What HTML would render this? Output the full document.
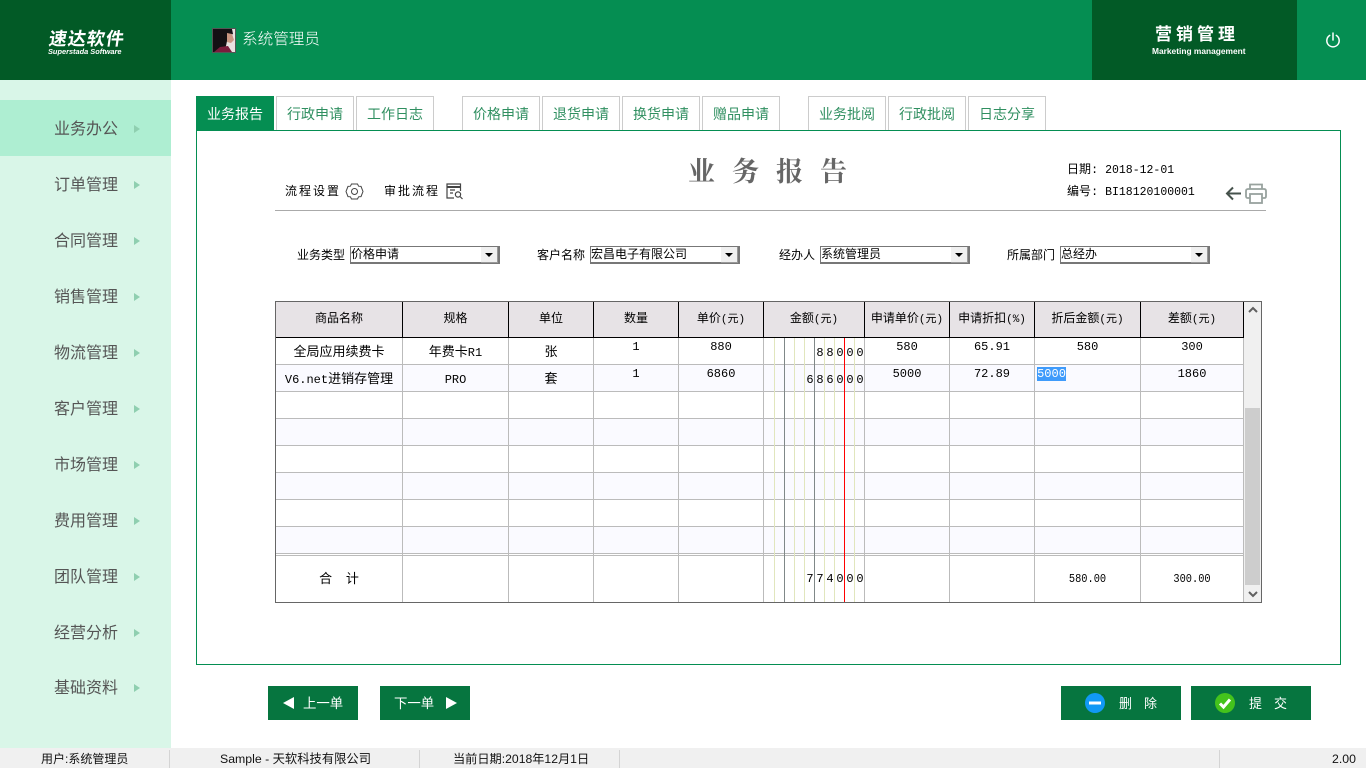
<!DOCTYPE html>
<html lang="zh">
<head>
<meta charset="utf-8">
<title>业务报告</title>
<style>
html,body{margin:0;padding:0;width:1366px;height:768px;overflow:hidden;background:#fff}
body{position:relative;font-family:"Liberation Sans","Noto Sans CJK SC",sans-serif;color:#000}
div,span,svg{position:absolute;box-sizing:border-box}
.t{white-space:nowrap;line-height:1}
.nav{left:0;width:171px;height:20px;line-height:20px;font-size:16px;color:#555;padding-left:54px;white-space:nowrap}
.nav i{position:absolute;left:134px;top:5px;width:0;height:0;border-left:6px solid #8fcfb0;border-top:4px solid transparent;border-bottom:4px solid transparent}
.tab{top:96px;width:78px;height:34px;border:1px solid #ccc;border-bottom:0;color:#2f8f60;font-size:14px;line-height:35px;text-align:center;background:#fff;white-space:nowrap}
.lab{font-size:12px;line-height:1;white-space:nowrap;top:249px;font-family:"WenQuanYi Zen Hei","Noto Sans CJK SC",sans-serif}
.sel{top:246px;width:150px;height:18px;background:#fff;border:1px solid #777;border-right-width:2px;border-bottom-width:2px;font-size:12px;line-height:14px;padding-left:0;white-space:nowrap;font-family:"WenQuanYi Zen Hei","Noto Sans CJK SC",sans-serif}
.sel b{position:absolute;right:0;top:0;width:16px;height:15px;background:#f0f0f0;border-right:1px solid #999;border-bottom:1px solid #999}
.sel b:after{content:"";position:absolute;left:4px;top:6px;border-top:4px solid #000;border-left:4px solid transparent;border-right:4px solid transparent}
.h{top:302px;height:35px;background:#e7e3e6;font-size:12px;line-height:35px;text-align:center;white-space:nowrap;font-family:"Liberation Mono","WenQuanYi Zen Hei","Noto Sans CJK SC",monospace}
.h em{position:static;font-style:normal;font-size:11px}
.v{top:302px;width:1px;height:300px;background:#bbb}
.vh{top:302px;width:1px;height:36px;background:#000}
.r{left:276px;width:967px;height:1px;background:#bbb}
.b{left:276px;width:967px;height:26px;background:#fafaff}
.c{font-size:13px;line-height:14px;text-align:center;white-space:nowrap;font-family:"Liberation Mono","WenQuanYi Zen Hei","Noto Sans CJK SC",monospace}
.c em{position:static;font-style:normal;font-size:12px}
.n{font-size:12px;line-height:14px;text-align:center;white-space:nowrap;font-family:"Liberation Mono",monospace}
.sm{transform:scaleX(.86)}
.d{width:10px;text-align:center;font-family:"Liberation Mono",monospace;font-size:12px;line-height:14px}
.btn{top:686px;height:34px;background:#06753f;color:#fff;font-size:13px;line-height:36px;white-space:nowrap}
.st{top:752px;font-size:12.3px;line-height:14px;white-space:nowrap;color:#111}
.sep{top:750px;width:1px;height:18px;background:#d4d4d4}
</style>
</head>
<body>
<!-- header -->
<div style="left:0;top:0;width:1366px;height:80px;background:#058e52"></div>
<div style="left:0;top:0;width:171px;height:80px;background:#025a26"></div>
<div class="t" style="left:49px;top:30px;color:#fff;font-size:18px;font-weight:bold;transform:skewX(-8deg);letter-spacing:1px">速达软件</div>
<div class="t" style="left:48px;top:48px;color:#fff;font-size:7.4px;font-weight:bold;font-style:italic">Superstada Software</div>
<svg style="left:212px;top:28px" width="24" height="25" viewBox="0 0 24 25">
<rect width="24" height="25" fill="#555"/>
<rect x="1" y="1" width="22" height="23" fill="#e8e2e0"/>
<path d="M1 1H20L21 6L16 8L14 18L10 24H1Z" fill="#141014"/>
<path d="M15 5L20 6L22 12L19 15L15 14Z" fill="#c99682"/>
<path d="M2 24L8 19L16 18L20 24Z" fill="#7a1c3c"/>
</svg>
<div class="t" style="left:242px;top:32px;color:#fff;font-size:15.6px;font-weight:300">系统管理员</div>
<div style="left:1092px;top:0;width:205px;height:80px;background:#025a26"></div>
<div class="t" style="left:1155px;top:26px;color:#fff;font-size:17px;font-weight:bold;letter-spacing:4px">营销管理</div>
<div class="t" style="left:1152px;top:47px;color:#fff;font-size:8.4px;font-weight:bold">Marketing management</div>
<svg style="left:1325px;top:32px" width="16" height="16" viewBox="0 0 16 16" fill="none" stroke="#fff" stroke-width="1.5" stroke-linecap="round"><path d="M4.7 3.4A6.2 6.2 0 1 0 11.3 3.4"/><path d="M8 1V8"/></svg>

<!-- sidebar -->
<div style="left:0;top:80px;width:171px;height:668px;background:#d9f6e8"></div>
<div style="left:0;top:100px;width:171px;height:56px;background:#aeeed2"></div>
<div class="nav" style="top:120px">业务办公<i></i></div>
<div class="nav" style="top:176px">订单管理<i></i></div>
<div class="nav" style="top:232px">合同管理<i></i></div>
<div class="nav" style="top:288px">销售管理<i></i></div>
<div class="nav" style="top:344px">物流管理<i></i></div>
<div class="nav" style="top:400px">客户管理<i></i></div>
<div class="nav" style="top:456px">市场管理<i></i></div>
<div class="nav" style="top:512px">费用管理<i></i></div>
<div class="nav" style="top:568px">团队管理<i></i></div>
<div class="nav" style="top:624px">经营分析<i></i></div>
<div class="nav" style="top:679px">基础资料<i></i></div>

<!-- tabs -->
<div class="tab" style="left:196px;background:#058e52;border-color:#058e52;color:#fff">业务报告</div>
<div class="tab" style="left:276px">行政申请</div>
<div class="tab" style="left:356px">工作日志</div>
<div class="tab" style="left:462px">价格申请</div>
<div class="tab" style="left:542px">退货申请</div>
<div class="tab" style="left:622px">换货申请</div>
<div class="tab" style="left:702px">赠品申请</div>
<div class="tab" style="left:808px">业务批阅</div>
<div class="tab" style="left:888px">行政批阅</div>
<div class="tab" style="left:968px">日志分享</div>

<!-- panel -->
<div style="left:196px;top:130px;width:1145px;height:535px;border:1px solid #058e52"></div>
<div class="t" style="left:688px;top:156px;font-size:27px;letter-spacing:17px;color:#666;font-family:'Noto Serif CJK SC',serif;font-weight:bold">业务报告</div>

<div class="t" style="left:285px;top:185px;font-size:12px;letter-spacing:2px;font-family:'WenQuanYi Zen Hei','Noto Sans CJK SC',sans-serif">流程设置</div>
<svg style="left:345px;top:182px" width="19" height="19" viewBox="0 0 19 19" fill="none" stroke="#444" stroke-width="1"><path d="M6.5 2H12.5L13.6 4.2L16 4.4L18 9.5L16 14.6L13.6 14.8L12.5 17H6.5L5.4 14.8L3 14.6L1 9.5L3 4.4L5.4 4.2Z"/><circle cx="9.5" cy="9.5" r="3"/></svg>
<div class="t" style="left:384px;top:185px;font-size:12px;letter-spacing:2px;font-family:'WenQuanYi Zen Hei','Noto Sans CJK SC',sans-serif">审批流程</div>
<svg style="left:446px;top:183px" width="18" height="17" viewBox="0 0 18 17" fill="none" stroke="#444" stroke-width="1.2"><path d="M14.5 8V1H1V15H8"/><path d="M1 4H14.5" stroke-width="2"/><path d="M4 7H9M4 10H7"/><circle cx="12" cy="11.5" r="2.6"/><path d="M14 13.5L16.5 16"/></svg>

<div class="t" style="left:1067px;top:164px;font-size:12px;font-family:'Liberation Mono','Noto Sans CJK SC',monospace">日期:<span style="position:static;font-size:11.5px"> 2018-12-01</span></div>
<div class="t" style="left:1067px;top:186px;font-size:12px;font-family:'Liberation Mono','Noto Sans CJK SC',monospace">编号:<span style="position:static;font-size:11.5px"> BI18120100001</span></div>
<svg style="left:1225px;top:186px" width="17" height="15" viewBox="0 0 17 15" fill="none" stroke="#46524c" stroke-width="2"><path d="M16 7.5H2M8 1.5L2 7.5L8 13.5"/></svg>
<svg style="left:1245px;top:183px" width="22" height="21" viewBox="0 0 22 21" fill="none" stroke="#98a29e" stroke-width="1.8"><path d="M5 6V1.5H17V6"/><path d="M5 15H2.5Q1 15 1 13V8Q1 6 3 6H19Q21 6 21 8V13Q21 15 19.5 15H17"/><rect x="5" y="11" width="12" height="9"/></svg>
<div style="left:275px;top:210px;width:991px;height:1px;background:#aaa"></div>

<!-- form -->
<div class="lab" style="left:297px">业务类型</div>
<div class="sel" style="left:350px">价格申请<b></b></div>
<div class="lab" style="left:537px">客户名称</div>
<div class="sel" style="left:590px">宏昌电子有限公司<b></b></div>
<div class="lab" style="left:779px">经办人</div>
<div class="sel" style="left:820px">系统管理员<b></b></div>
<div class="lab" style="left:1007px">所属部门</div>
<div class="sel" style="left:1060px">总经办<b></b></div>

<!-- table -->
<div style="left:275px;top:301px;width:987px;height:302px;background:#fff"></div>
<div class="b" style="top:365px"></div>
<div class="b" style="top:419px"></div>
<div class="b" style="top:473px"></div>
<div class="b" style="top:527px"></div>

<div class="h" style="left:276px;width:126px">商品名称</div>
<div class="h" style="left:403px;width:105px">规格</div>
<div class="h" style="left:509px;width:84px">单位</div>
<div class="h" style="left:594px;width:84px">数量</div>
<div class="h" style="left:679px;width:84px">单价<em>(元)</em></div>
<div class="h" style="left:764px;width:100px">金额<em>(元)</em></div>
<div class="h" style="left:865px;width:84px">申请单价<em>(元)</em></div>
<div class="h" style="left:950px;width:84px">申请折扣<em>(%)</em></div>
<div class="h" style="left:1035px;width:105px">折后金额<em>(元)</em></div>
<div class="h" style="left:1141px;width:102px">差额<em>(元)</em></div>

<div class="r" style="top:364px"></div>
<div class="r" style="top:391px"></div>
<div class="r" style="top:418px"></div>
<div class="r" style="top:445px"></div>
<div class="r" style="top:472px"></div>
<div class="r" style="top:499px"></div>
<div class="r" style="top:526px"></div>
<div class="r" style="top:553px"></div>
<div class="r" style="top:555px"></div>

<div class="v" style="left:402px"></div>
<div class="v" style="left:508px"></div>
<div class="v" style="left:593px"></div>
<div class="v" style="left:678px"></div>
<div class="v" style="left:763px"></div>
<div class="v" style="left:864px"></div>
<div class="v" style="left:949px"></div>
<div class="v" style="left:1034px"></div>
<div class="v" style="left:1140px"></div>
<div class="v" style="left:1243px"></div>

<div class="v" style="left:774px;top:338px;height:264px;background:#e1e6bd"></div>
<div class="v" style="left:784px;top:338px;height:264px;background:#808888"></div>
<div class="v" style="left:794px;top:338px;height:264px;background:#e1e6bd"></div>
<div class="v" style="left:804px;top:338px;height:264px;background:#e1e6bd"></div>
<div class="v" style="left:814px;top:338px;height:264px;background:#808888"></div>
<div class="v" style="left:824px;top:338px;height:264px;background:#e1e6bd"></div>
<div class="v" style="left:834px;top:338px;height:264px;background:#e1e6bd"></div>
<div class="v" style="left:844px;top:338px;height:264px;background:#f00"></div>
<div class="v" style="left:854px;top:338px;height:264px;background:#e1e6bd"></div>

<div class="vh" style="left:402px"></div>
<div class="vh" style="left:508px"></div>
<div class="vh" style="left:593px"></div>
<div class="vh" style="left:678px"></div>
<div class="vh" style="left:763px"></div>
<div class="vh" style="left:864px"></div>
<div class="vh" style="left:949px"></div>
<div class="vh" style="left:1034px"></div>
<div class="vh" style="left:1140px"></div>
<div style="left:276px;top:337px;width:968px;height:1px;background:#000"></div>
<div class="vh" style="left:1243px"></div>

<div class="c" style="left:276px;width:126px;top:346px">全局应用续费卡</div>
<div class="c" style="left:403px;width:105px;top:346px">年费卡<em>R1</em></div>
<div class="c" style="left:509px;width:84px;top:346px">张</div>
<div class="n" style="left:594px;width:84px;top:340px">1</div>
<div class="n" style="left:679px;width:84px;top:340px">880</div>
<div class="n" style="left:865px;width:84px;top:340px">580</div>
<div class="n" style="left:950px;width:84px;top:340px">65.91</div>
<div class="n" style="left:1035px;width:105px;top:340px">580</div>
<div class="n" style="left:1141px;width:102px;top:340px">300</div>

<div class="c" style="left:276px;width:126px;top:373px"><em>V6.net</em>进销存管理</div>
<div class="c" style="left:403px;width:105px;top:373px"><em>PRO</em></div>
<div class="c" style="left:509px;width:84px;top:373px">套</div>
<div class="n" style="left:594px;width:84px;top:367px">1</div>
<div class="n" style="left:679px;width:84px;top:367px">6860</div>
<div class="n" style="left:865px;width:84px;top:367px">5000</div>
<div class="n" style="left:950px;width:84px;top:367px">72.89</div>
<div style="left:1037px;top:367px;width:29px;height:14px;background:#3f9bfb"></div>
<div class="n" style="left:1037px;width:29px;top:367px;color:#fff">5000</div>
<div class="n" style="left:1141px;width:102px;top:367px">1860</div>

<div class="d" style="left:815px;top:346px">8</div><div class="d" style="left:825px;top:346px">8</div><div class="d" style="left:835px;top:346px">0</div><div class="d" style="left:845px;top:346px">0</div><div class="d" style="left:855px;top:346px">0</div>
<div class="d" style="left:805px;top:373px">6</div><div class="d" style="left:815px;top:373px">8</div><div class="d" style="left:825px;top:373px">6</div><div class="d" style="left:835px;top:373px">0</div><div class="d" style="left:845px;top:373px">0</div><div class="d" style="left:855px;top:373px">0</div>
<div class="d" style="left:805px;top:572px">7</div><div class="d" style="left:815px;top:572px">7</div><div class="d" style="left:825px;top:572px">4</div><div class="d" style="left:835px;top:572px">0</div><div class="d" style="left:845px;top:572px">0</div><div class="d" style="left:855px;top:572px">0</div>

<div class="c" style="left:276px;width:126px;top:573px;word-spacing:6px">合 计</div>
<div class="n sm" style="left:1035px;width:105px;top:572px">580.00</div>
<div class="n sm" style="left:1141px;width:102px;top:572px">300.00</div>

<!-- scrollbar -->
<div style="left:1244px;top:302px;width:17px;height:300px;background:#f0f0f0"></div>
<div style="left:1245px;top:408px;width:15px;height:177px;background:#cdcdcd"></div>
<svg style="left:1248px;top:306px" width="10" height="8" viewBox="0 0 10 8" fill="none" stroke="#606060" stroke-width="2"><path d="M1 6L5 2L9 6"/></svg>
<svg style="left:1248px;top:590px" width="10" height="8" viewBox="0 0 10 8" fill="none" stroke="#606060" stroke-width="2"><path d="M1 2L5 6L9 2"/></svg>
<div style="left:275px;top:301px;width:987px;height:302px;border:1px solid #666"></div>

<!-- buttons -->
<div class="btn" style="left:268px;width:90px">
<span style="left:15px;top:11px;width:0;height:0;border-right:11px solid #fff;border-top:6px solid transparent;border-bottom:6px solid transparent"></span>
<span style="left:35px;top:0;font-size:13.4px">上一单</span></div>
<div class="btn" style="left:380px;width:90px">
<span style="left:14px;top:0;font-size:13.4px">下一单</span>
<span style="left:66px;top:11px;width:0;height:0;border-left:11px solid #fff;border-top:6px solid transparent;border-bottom:6px solid transparent"></span></div>
<div class="btn" style="left:1061px;width:120px">
<svg style="left:24px;top:7px" width="20" height="20" viewBox="0 0 20 20"><circle cx="10" cy="10" r="10" fill="#1199f5"/><rect x="4" y="8.5" width="12" height="3" fill="#fff"/></svg>
<span style="left:58px;top:0;letter-spacing:12px">删除</span></div>
<div class="btn" style="left:1191px;width:120px">
<svg style="left:24px;top:7px" width="20" height="20" viewBox="0 0 20 20"><circle cx="10" cy="10" r="10" fill="#44c31c"/><path d="M5 10.5L8.5 14L15 6.5" fill="none" stroke="#fff" stroke-width="3"/></svg>
<span style="left:58px;top:0;letter-spacing:12px">提交</span></div>

<!-- status bar -->
<div style="left:0;top:748px;width:1366px;height:20px;background:#f0f0f0"></div>
<div class="sep" style="left:169px"></div>
<div class="sep" style="left:419px"></div>
<div class="sep" style="left:619px"></div>
<div class="sep" style="left:1219px"></div>
<div class="st" style="left:41px;font-size:12px">用户:系统管理员</div>
<div class="st" style="left:220px">Sample - 天软科技有限公司</div>
<div class="st" style="left:453px;font-size:12.2px">当前日期:2018年12月1日</div>
<div class="st" style="left:1332px">2.00</div>
</body>
</html>
